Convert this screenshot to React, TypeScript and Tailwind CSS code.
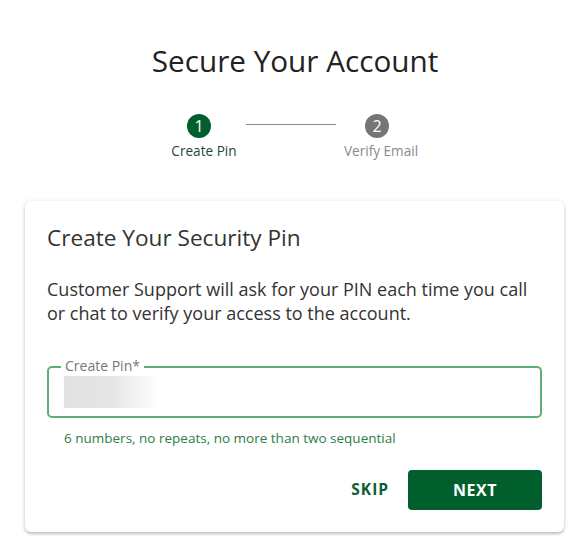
import React from "react";

const font = { fontFamily: '"Open Sans", "Noto Sans", sans-serif' };

const App = () => {
  return (
    <div className="min-h-screen bg-white" style={font}>
      <h1 className="pl-[9px] pt-[41px] text-center text-[29.7px] leading-[40px] text-[#222]">
        Secure Your Account
      </h1>

      {/* stepper */}
      <div className="mt-[33px] flex items-start pl-[152px]">
        <div className="flex w-[94px] flex-col items-center">
          <div className="flex h-[24px] w-[24px] items-center justify-center rounded-full bg-[#005f2c] text-[16px] text-white">
            1
          </div>
          <span className="ml-[10px] mt-[4px] whitespace-nowrap text-[13.6px] leading-[18px] text-[#1c4a34]">
            Create Pin
          </span>
        </div>
        <div className="mt-[10px] h-px w-[90px] bg-[#8a8a8a]" />
        <div className="flex w-[82px] flex-col items-center">
          <div className="flex h-[24px] w-[24px] items-center justify-center rounded-full bg-[#757575] text-[16px] text-white">
            2
          </div>
          <span className="ml-[8px] mt-[4px] whitespace-nowrap text-[13.6px] leading-[18px] text-[#8a8a8a]">
            Verify Email
          </span>
        </div>
      </div>

      {/* card */}
      <div className="ml-[25px] mr-[17px] mt-[41px] rounded-[6px] bg-white px-[22px] pb-[22px] pt-[22px] shadow-[0_2px_3px_rgba(0,0,0,0.22),0_0_6px_rgba(0,0,0,0.08)]">
        <h2 className="text-[22.6px] leading-[30px] text-[#333]">
          Create Your Security Pin
        </h2>
        <p className="mt-[24px] text-[18px] leading-[24px] text-[#333]">
          Customer Support will ask for your PIN each time you call or chat to
          verify your access to the account.
        </p>

        <div className="relative mt-[41px] h-[52px] rounded-[5px] border-2 border-[#5fae77]">
          <span className="absolute left-[12px] top-[-11px] bg-white px-[4px] text-[14px] leading-[18px] text-[#777]">
            Create Pin*
          </span>
          <div className="ml-[15px] mt-[8px] h-[32px] w-[96px] bg-gradient-to-r from-[#e2e2e2] via-[#e6e6e6] to-white" />
        </div>
        <p className="ml-[17px] mt-[11px] text-[13.5px] leading-[18px] text-[#2e7d4a]">
          6 numbers, no repeats, no more than two sequential
        </p>

        <div className="mt-[23px] flex items-center justify-end gap-[19px]">
          <button className="text-[15.5px] font-bold tracking-[1px] text-[#0b5e32]">
            SKIP
          </button>
          <button className="h-[40px] w-[134px] rounded-[4px] bg-[#005f2c] text-[16px] font-bold tracking-[0.5px] text-white">
            NEXT
          </button>
        </div>
      </div>
    </div>
  );
};

export default App;
